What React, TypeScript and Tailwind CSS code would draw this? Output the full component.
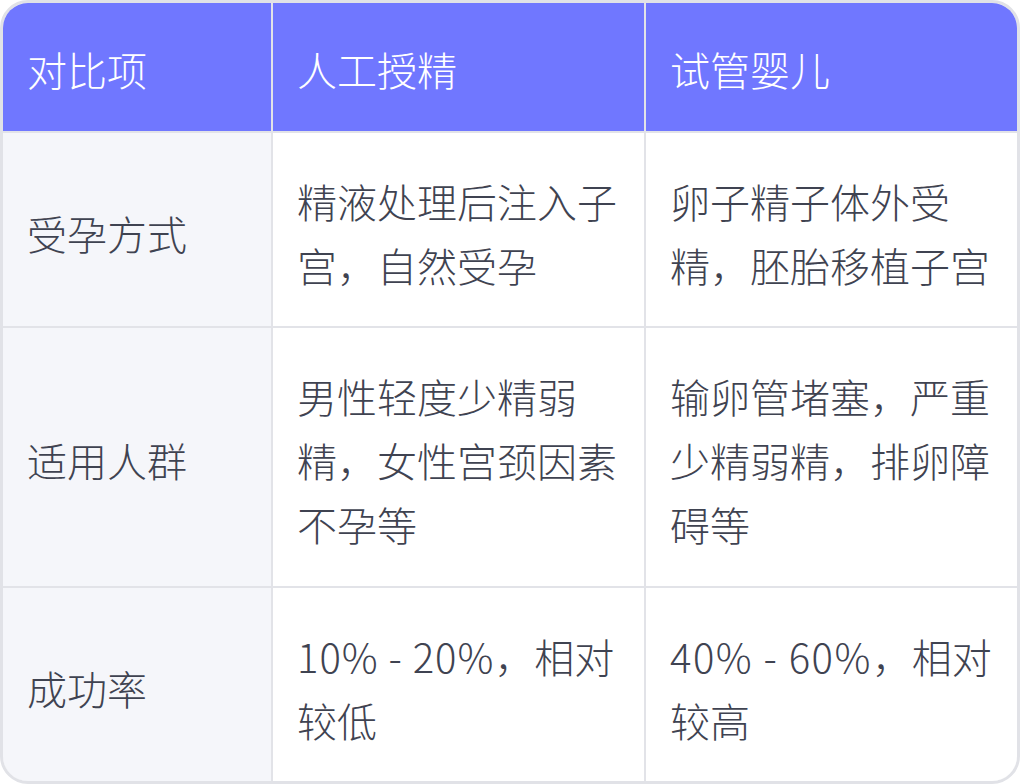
import type { ReactNode } from "react";

type Row = {
  label: string;
  iui: ReactNode;
  ivf: ReactNode;
};

const rows: Row[] = [
  {
    label: "受孕方式",
    iui: "精液处理后注入子宫，自然受孕",
    ivf: "卵子精子体外受精，胚胎移植子宫",
  },
  {
    label: "适用人群",
    iui: "男性轻度少精弱精，女性宫颈因素不孕等",
    ivf: "输卵管堵塞，严重少精弱精，排卵障碍等",
  },
  {
    label: "成功率",
    iui: (
      <>
        <span className="tracking-[1px]">10% - 20%</span>，相对较低
      </>
    ),
    ivf: (
      <>
        <span className="tracking-[1.5px]">40% - 60%</span>，相对较高
      </>
    ),
  },
];

const headers = ["对比项", "人工授精", "试管婴儿"];

export default function App() {
  return (
    <div
      className="h-[784px] w-[1020px] bg-white font-light"
      style={{ fontFamily: '"Noto Sans CJK SC", "Noto Sans", sans-serif' }}
    >
      <div className="h-full w-full overflow-hidden rounded-[28px] border-[3px] border-[#e1e2e7]">
        <div className="grid h-full grid-cols-[268px_371px_371px] grid-rows-[128px_193px_258px_193px] gap-[2px] bg-[#e2e3e8]">
          {/* 表头 */}
          {headers.map((h) => (
            <div
              key={h}
              className="flex items-center bg-[#7077ff] px-6 pt-[4px] text-[40px] leading-[64px] text-white"
            >
              {h}
            </div>
          ))}

          {/* 内容行 */}
          {rows.map((row) => (
            <div key={row.label} className="contents">
              <div className="flex items-center bg-[#f5f6fa] px-6 pt-[6px] text-[40px] leading-[64px] text-[#3f4351]">
                {row.label}
              </div>
              <div className="flex items-center bg-white px-6 pt-[6px] text-[40px] leading-[64px] text-[#3f4351]">
                <p>{row.iui}</p>
              </div>
              <div className="flex items-center bg-white px-6 pt-[6px] text-[40px] leading-[64px] text-[#3f4351]">
                <p>{row.ivf}</p>
              </div>
            </div>
          ))}
        </div>
      </div>
    </div>
  );
}
